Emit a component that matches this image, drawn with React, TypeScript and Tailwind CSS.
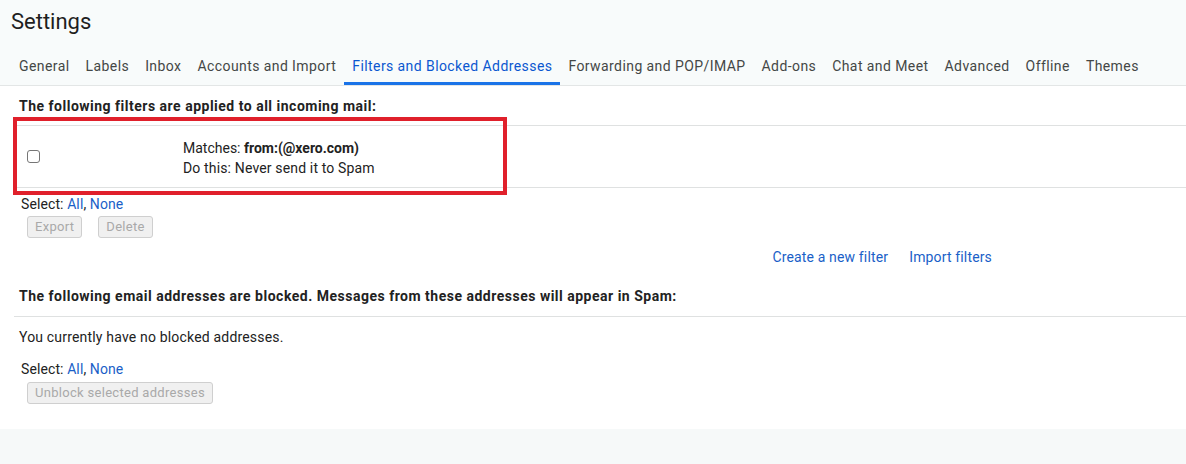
const tabs = [
  "General",
  "Labels",
  "Inbox",
  "Accounts and Import",
  "Filters and Blocked Addresses",
  "Forwarding and POP/IMAP",
  "Add-ons",
  "Chat and Meet",
  "Advanced",
  "Offline",
  "Themes",
];

const ACTIVE = "Filters and Blocked Addresses";

const SelectLinks = () => (
  <div className="h-[16px] text-[14px] leading-[16px] tracking-[0.1px] text-[#222]">
    Select: <a className="text-[#1a5fc8] cursor-pointer">All</a>,{" "}
    <a className="text-[#1a5fc8] cursor-pointer">None</a>
  </div>
);

const DisabledButton = ({ text }: { text: string }) => (
  <button
    disabled
    className="h-[22px] px-[7px] rounded-[3px] border border-[#cfcfcf] bg-[#f0f0f0] text-[13px] leading-[20px] tracking-[0.3px] text-[#a9a9a9]"
  >
    {text}
  </button>
);

export default function App() {
  return (
    <div className="w-[1186px] h-[464px] bg-[#f6f9f9] font-['Roboto',sans-serif] text-[#222] flex flex-col">
      {/* Header */}
      <div className="bg-[#f8fbfb] border-b border-[#e3e6e6]">
        <div className="h-[48px] pl-[11px] pt-[8px]">
          <h1 className="text-[22px] leading-[28px] text-[#1f1f1f]">Settings</h1>
        </div>
        <div className="flex pl-[11px] h-[37px]">
          {tabs.map((t) => (
            <div
              key={t}
              className={
                t === ACTIVE
                  ? "h-full px-[8px] pt-[8px] text-[14px] leading-[20px] tracking-[0.42px] text-[#0b57d0] border-b-[3px] border-[#1a73e8] cursor-pointer"
                  : "h-full px-[8px] pt-[8px] text-[14px] leading-[20px] tracking-[0.42px] text-[#444746] border-b-[3px] border-transparent cursor-pointer"
              }
            >
              {t}
            </div>
          ))}
        </div>
      </div>

      {/* Content */}
      <div className="relative bg-white h-[343px]">
        <div className="pl-[19px] pt-[10px] text-[14px] leading-[20px] tracking-[0.5px] font-bold">
          The following filters are applied to all incoming mail:
        </div>

        <div className="ml-[14px] mt-[9px] h-[63px] border-y border-[#dfe1e1] flex items-center">
          <div className="w-[169px] pl-[13px] flex items-center">
            <input
              type="checkbox"
              className="w-[13px] h-[13px] appearance-none rounded-[3px] border border-[#767676] bg-white"
            />
          </div>
          <div className="text-[14px] leading-[20px] text-[#222] pt-[3px]">
            <div>
              Matches: <span className="font-bold">from:(@xero.com)</span>
            </div>
            <div className="tracking-[0.15px]">Do this: Never send it to Spam</div>
          </div>
        </div>

        <div className="pl-[21px] pt-[8px]">
          <SelectLinks />
          <div className="flex gap-[16px] pl-[6px] mt-[4px]">
            <DisabledButton text="Export" />
            <DisabledButton text="Delete" />
          </div>
        </div>

        <div className="flex justify-end gap-[21px] pr-[194px] mt-[11px] text-[14px] leading-[16px] tracking-[0.15px] text-[#1a5fc8]">
          <a className="cursor-pointer">Create a new filter</a>
          <a className="cursor-pointer">Import filters</a>
        </div>

        <div className="pl-[19px] mt-[21px] text-[14px] leading-[20px] tracking-[0.5px] font-bold">
          The following email addresses are blocked. Messages from these addresses will appear in Spam:
        </div>
        <div className="ml-[14px] mt-[10px] border-t border-[#dfe1e1]" />
        <div className="pl-[19px] mt-[10px] text-[14px] leading-[20px] tracking-[0.18px]">
          You currently have no blocked addresses.
        </div>

        <div className="pl-[21px] mt-[14px]">
          <SelectLinks />
          <div className="pl-[6px] mt-[3px]">
            <DisabledButton text="Unblock selected addresses" />
          </div>
        </div>

        {/* annotation box */}
        <div className="absolute left-[13px] top-[31px] w-[494px] h-[78px] border-[4px] border-[#e0202b] pointer-events-none" />
      </div>
    </div>
  );
}
